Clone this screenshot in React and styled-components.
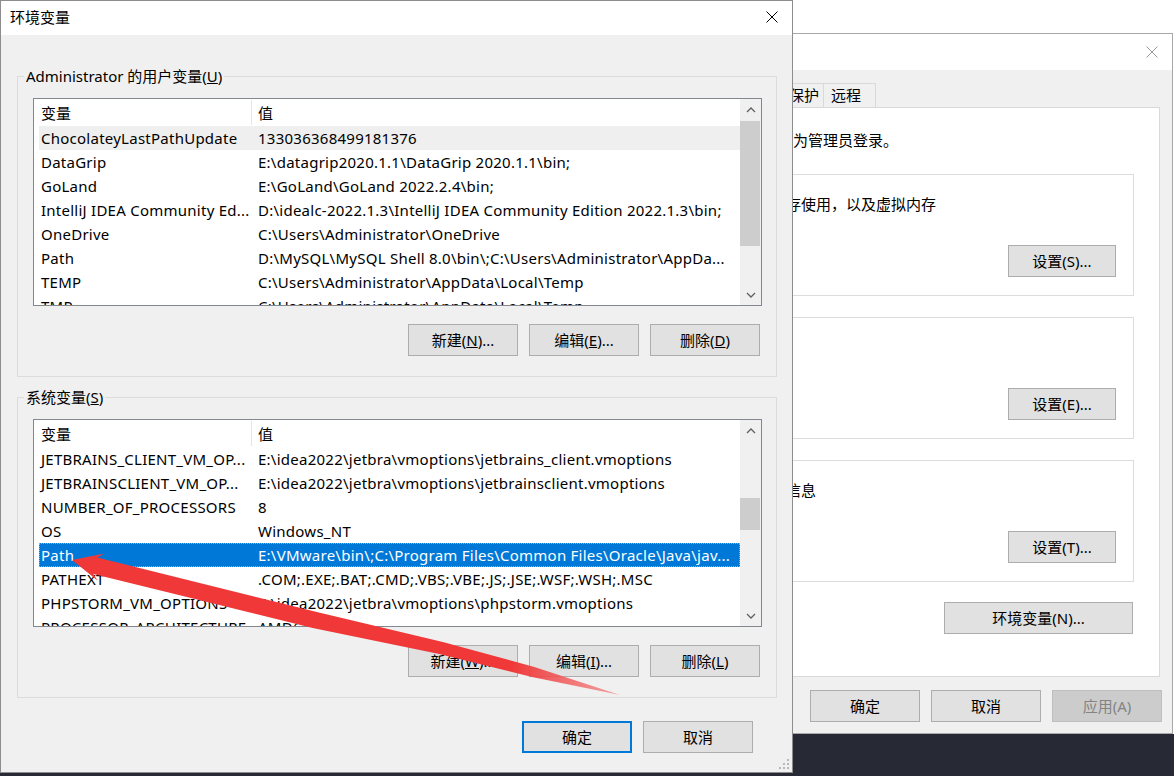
import React from "react";
import styled, { createGlobalStyle } from "styled-components";

const GlobalStyle = createGlobalStyle`
  html, body {
    margin: 0;
    padding: 0;
  }
  body {
    width: 1174px;
    height: 776px;
    overflow: hidden;
    background: linear-gradient(to bottom, #ffffff 0, #ffffff 734px, #272a35 734px);
    font-family: "Noto Sans", "Noto Sans CJK SC", sans-serif;
    font-size: 15px;
    color: #000;
  }
  * {
    box-sizing: border-box;
  }
`;

const Desktop = styled.div`
  position: relative;
  width: 1174px;
  height: 776px;
  overflow: hidden;
`;

// windows sit on the desktop at their own place
const Window = styled.div`
  position: absolute;
  left: ${(p) => p.$left}px;
  top: ${(p) => p.$top}px;
  width: ${(p) => p.$width}px;
  height: ${(p) => p.$height}px;
  background: #f0f0f0;
  border: 1px solid ${(p) => (p.$active ? "#8d8d8d" : "#a8a8a8")};
  display: flex;
  flex-direction: column;
`;

const TitleBar = styled.div`
  height: ${(p) => p.$h}px;
  flex: none;
  background: #fff;
  display: flex;
  align-items: center;
  justify-content: space-between;
  padding: 0 ${(p) => p.$pr}px ${(p) => p.$pb || 0}px 9px;
  font-size: 15px;
`;

const Body = styled.div`
  flex: 1;
  display: flex;
  flex-direction: column;
  padding: ${(p) => p.$pad};
  position: relative;
`;

const GroupBox = styled.fieldset`
  margin: ${(p) => p.$mt || 0}px 0 0 0;
  padding: ${(p) => p.$pad};
  border: 1px solid #dcdcdc;
  min-width: 0;
  height: ${(p) => (p.$h ? `${p.$h}px` : "auto")};
  display: flex;
  flex-direction: column;
`;

const Legend = styled.legend`
  padding: 0 2px;
  margin-left: ${(p) => p.$ml}px;
  line-height: 20px;
  font-size: 15px;
`;

const ListFrame = styled.div`
  height: 208px;
  border: 1px solid #828790;
  background: #fff;
  display: flex;
`;

const ListContent = styled.div`
  flex: 1;
  min-width: 0;
  overflow: hidden;
  padding-left: 5px;
`;

const HeaderRow = styled.div`
  display: flex;
  height: 27px;
  align-items: stretch;
`;

const HeaderCell = styled.div`
  display: flex;
  align-items: center;
  width: ${(p) => (p.$w ? `${p.$w}px` : "auto")};
  flex: ${(p) => (p.$w ? "none" : "1")};
  padding-left: ${(p) => p.$pl}px;
  margin-top: 1px;
  margin-bottom: 1px;
  border-right: ${(p) => (p.$divider ? "1px solid #e5e5e5" : "none")};
  white-space: nowrap;
`;

const Row = styled.div`
  display: flex;
  height: 24px;
  line-height: 24px;
  letter-spacing: 0.25px;
  white-space: nowrap;
  background: ${(p) => (p.$selected ? "#0078d7" : p.$hot ? "#efefef" : "transparent")};
  color: ${(p) => (p.$selected ? "#fff" : "#000")};
  outline: ${(p) => (p.$selected ? "1px dotted #f0a030" : "none")};
  outline-offset: -1px;
`;

const Cell = styled.div`
  width: ${(p) => (p.$w ? `${p.$w}px` : "auto")};
  flex: ${(p) => (p.$w ? "none" : "1")};
  min-width: 0;
  overflow: hidden;
  padding-left: ${(p) => p.$pl}px;
`;

const ScrollBar = styled.div`
  width: 21px;
  flex: none;
  background: #f0f0f0;
  display: flex;
  flex-direction: column;
`;

const ScrollArrow = styled.div`
  height: 21px;
  flex: none;
  display: flex;
  align-items: center;
  justify-content: center;
`;

const ScrollTrack = styled.div`
  flex: 1;
  display: flex;
  flex-direction: column;
`;

const Thumb = styled.div`
  margin: ${(p) => p.$top}px 1px 0 0;
  height: ${(p) => p.$h}px;
  background: #cdcdcd;
`;

const ButtonRow = styled.div`
  display: flex;
  justify-content: flex-end;
  gap: ${(p) => p.$gap || 11}px;
  margin-top: ${(p) => p.$mt}px;
  margin-right: ${(p) => p.$mr || 0}px;
`;

const Button = styled.button`
  width: ${(p) => p.$w || 110}px;
  height: 32px;
  padding: 0;
  font-family: inherit;
  font-size: 15px;
  line-height: 20px;
  color: ${(p) => (p.disabled ? "#838383" : "#000")};
  background: ${(p) => (p.disabled ? "#cccccc" : "#e1e1e1")};
  border: ${(p) =>
    p.$default ? "2px solid #0078d7" : `1px solid ${p.disabled ? "#bfbfbf" : "#adadad"}`};
  white-space: nowrap;
`;

const TabStrip = styled.div`
  display: flex;
  height: 25px;
  flex: none;
`;

const Tab = styled.div`
  width: ${(p) => p.$w}px;
  margin-right: -1px;
  padding-left: 7px;
  border: 1px solid #d9d9d9;
  border-bottom: none;
  background: ${(p) => (p.$active ? "#fff" : "#f0f0f0")};
  line-height: 23px;
  white-space: nowrap;
`;

const TabPanel = styled.div`
  height: 570px;
  flex: none;
  margin-top: -1px;
  background: #fff;
  border: 1px solid #d9d9d9;
  padding: 20px 25px 0 24px;
  display: flex;
  flex-direction: column;
`;

const Text = styled.div`
  line-height: ${(p) => p.$lh || 20}px;
  white-space: nowrap;
`;

const Grip = styled.svg`
  position: absolute;
  right: 2px;
  bottom: 2px;
`;

const ArrowLayer = styled.svg`
  position: absolute;
  left: 0;
  top: 0;
  pointer-events: none;
`;

const CloseIcon = ({ color }) => (
  <svg width="12" height="12" viewBox="0 0 12 12">
    <path d="M0.5 0.5 L11.5 11.5 M11.5 0.5 L0.5 11.5" stroke={color} strokeWidth="1" fill="none" />
  </svg>
);

const Chevron = ({ up }) => (
  <svg width="10" height="6" viewBox="0 0 10 6">
    <path
      d={up ? "M1 5 L5 1 L9 5" : "M1 1 L5 5 L9 1"}
      stroke="#606060"
      strokeWidth="1.3"
      fill="none"
    />
  </svg>
);

const userVars = [
  ["ChocolateyLastPathUpdate", "133036368499181376"],
  ["DataGrip", "E:\\datagrip2020.1.1\\DataGrip 2020.1.1\\bin;"],
  ["GoLand", "E:\\GoLand\\GoLand 2022.2.4\\bin;"],
  ["IntelliJ IDEA Community Ed...", "D:\\idealc-2022.1.3\\IntelliJ IDEA Community Edition 2022.1.3\\bin;"],
  ["OneDrive", "C:\\Users\\Administrator\\OneDrive"],
  ["Path", "D:\\MySQL\\MySQL Shell 8.0\\bin\\;C:\\Users\\Administrator\\AppDa..."],
  ["TEMP", "C:\\Users\\Administrator\\AppData\\Local\\Temp"],
  ["TMP", "C:\\Users\\Administrator\\AppData\\Local\\Temp"],
];

const systemVars = [
  ["JETBRAINS_CLIENT_VM_OP...", "E:\\idea2022\\jetbra\\vmoptions\\jetbrains_client.vmoptions"],
  ["JETBRAINSCLIENT_VM_OP...", "E:\\idea2022\\jetbra\\vmoptions\\jetbrainsclient.vmoptions"],
  ["NUMBER_OF_PROCESSORS", "8"],
  ["OS", "Windows_NT"],
  ["Path", "E:\\VMware\\bin\\;C:\\Program Files\\Common Files\\Oracle\\Java\\jav..."],
  ["PATHEXT", ".COM;.EXE;.BAT;.CMD;.VBS;.VBE;.JS;.JSE;.WSF;.WSH;.MSC"],
  ["PHPSTORM_VM_OPTIONS", "E:\\idea2022\\jetbra\\vmoptions\\phpstorm.vmoptions"],
  ["PROCESSOR_ARCHITECTURE", "AMD64"],
];

const ListView = ({ rows, hot, selected, thumbTop, thumbHeight }) => (
  <ListFrame>
    <ListContent>
      <HeaderRow>
        <HeaderCell $w={213} $pl={2} $divider>
          变量
        </HeaderCell>
        <HeaderCell $pl={6}>值</HeaderCell>
      </HeaderRow>
      {rows.map(([name, value], i) => (
        <Row key={name + i} $hot={i === hot} $selected={i === selected}>
          <Cell $w={213} $pl={2}>
            {name}
          </Cell>
          <Cell $pl={6}>{value}</Cell>
        </Row>
      ))}
    </ListContent>
    <ScrollBar>
      <ScrollArrow>
        <Chevron up />
      </ScrollArrow>
      <ScrollTrack>
        <Thumb $top={thumbTop} $h={thumbHeight} />
      </ScrollTrack>
      <ScrollArrow>
        <Chevron />
      </ScrollArrow>
    </ScrollBar>
  </ListFrame>
);

const SystemProperties = () => (
  <Window $left={560} $top={33} $width={613} $height={701}>
    <TitleBar $h={36} $pr={14}>
      <span>系统属性</span>
      <CloseIcon color="#9a9a9a" />
    </TitleBar>
    <Body $pad="13px 12px 0 12px">
      <TabStrip>
        <Tab $w={77}>计算机名</Tab>
        <Tab $w={52}>硬件</Tab>
        <Tab $w={52} $active>
          高级
        </Tab>
        <Tab $w={73}>系统保护</Tab>
        <Tab $w={53}>远程</Tab>
      </TabStrip>
      <TabPanel>
        <Text $lh={24}>要进行大多数更改，你必须作为管理员登录。</Text>
        <GroupBox $mt={12} $h={132} $pad="10px 17px 18px 7px">
          <Legend $ml={-4}>性能</Legend>
          <Text>视觉效果，处理器计划，内存使用，以及虚拟内存</Text>
          <ButtonRow $mt={31}>
            <Button $w={108}>设置(S)...</Button>
          </ButtonRow>
        </GroupBox>
        <GroupBox $mt={11} $h={132} $pad="10px 17px 18px 7px">
          <Legend $ml={-4}>用户配置文件</Legend>
          <Text>与登录帐户相关的桌面设置</Text>
          <ButtonRow $mt={31}>
            <Button $w={108}>设置(E)...</Button>
          </ButtonRow>
        </GroupBox>
        <GroupBox $mt={11} $h={132} $pad="10px 17px 18px 7px">
          <Legend $ml={-4}>启动和故障恢复</Legend>
          <Text>系统启动、系统故障和调试信息</Text>
          <ButtonRow $mt={31}>
            <Button $w={108}>设置(T)...</Button>
          </ButtonRow>
        </GroupBox>
        <ButtonRow $mt={20} $mr={1}>
          <Button $w={189}>环境变量(N)...</Button>
        </ButtonRow>
      </TabPanel>
      <ButtonRow $mt={13} $mr={-2}>
        <Button>确定</Button>
        <Button>取消</Button>
        <Button disabled>应用(A)</Button>
      </ButtonRow>
    </Body>
  </Window>
);

const EnvironmentVariables = () => (
  <Window $left={0} $top={0} $width={793} $height={773} $active>
    <TitleBar $h={34} $pr={14} $pb={3}>
      <span>环境变量</span>
      <CloseIcon color="#000" />
    </TitleBar>
    <Body $pad="31px 15px 0 16px">
      <GroupBox $pad="12px 14px 20px 15px">
        <Legend $ml={-9}>
          Administrator 的用户变量(<u>U</u>)
        </Legend>
        <ListView rows={userVars} hot={0} thumbTop={1} thumbHeight={125} />
        <ButtonRow $mt={18} $mr={2}>
          <Button>
            新建(<u>N</u>)...
          </Button>
          <Button>
            编辑(<u>E</u>)...
          </Button>
          <Button>
            删除(<u>D</u>)
          </Button>
        </ButtonRow>
      </GroupBox>
      <GroupBox $mt={10} $pad="12px 14px 20px 15px">
        <Legend $ml={-9}>
          系统变量(<u>S</u>)
        </Legend>
        <ListView rows={systemVars} selected={4} thumbTop={57} thumbHeight={32} />
        <ButtonRow $mt={18} $mr={2}>
          <Button>
            新建(<u>W</u>)...
          </Button>
          <Button>
            编辑(<u>I</u>)...
          </Button>
          <Button>
            删除(<u>L</u>)
          </Button>
        </ButtonRow>
      </GroupBox>
      <ButtonRow $mt={23} $mr={24}>
        <Button $default>确定</Button>
        <Button>取消</Button>
      </ButtonRow>
      <Grip width="12" height="12" viewBox="0 0 12 12">
        {[
          [9, 1],
          [9, 5],
          [5, 5],
          [9, 9],
          [5, 9],
          [1, 9],
        ].map(([x, y]) => (
          <rect key={`${x}-${y}`} x={x} y={y} width="2" height="2" fill="#b8b8b8" />
        ))}
      </Grip>
    </Body>
  </Window>
);

const RedArrow = () => (
  <ArrowLayer width="1174" height="776" viewBox="0 0 1174 776">
    <defs>
      <linearGradient id="arrowFade" x1="72" y1="560" x2="620" y2="695" gradientUnits="userSpaceOnUse">
        <stop offset="0" stopColor="#f03838" />
        <stop offset="0.8" stopColor="#f03838" />
        <stop offset="1" stopColor="#f26a6a" stopOpacity="0.6" />
      </linearGradient>
    </defs>
    <polygon
      fill="url(#arrowFade)"
      points="72,560 104.5,553.6 97.3,557.5 316.8,612 442.8,642 534.4,667 620,695 532,677 439.2,654 312.7,628 93.3,574 97.8,580.8"
    />
  </ArrowLayer>
);

const App = () => (
  <>
    <GlobalStyle />
    <Desktop>
      <SystemProperties />
      <EnvironmentVariables />
      <RedArrow />
    </Desktop>
  </>
);

export default App;
